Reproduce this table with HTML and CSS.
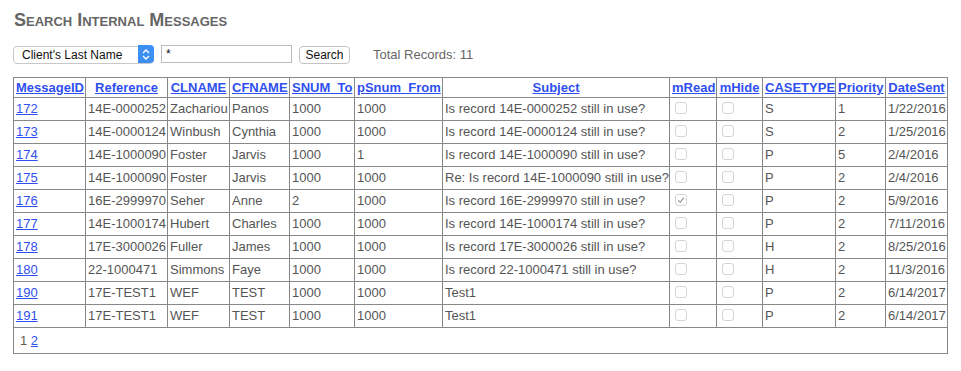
FILE: index.html
```html
<!DOCTYPE HTML>
<html lang="en">
<head>
    <meta charset="utf-8">
    <title>Search Internal Messages</title>
    <link rel="stylesheet" href="styles.css">
</head>
<body>
    <div class="page">
        <h2 class="page-title">Search Internal Messages</h2>

        <div class="search-bar">
            <span class="select-wrap">
                <select class="search-field">
                    <option>Client's Last Name</option>
                    <option>Reference</option>
                    <option>Subject</option>
                </select>
                <span class="select-arrow">
                    <svg width="8" height="11" viewBox="0 0 8 11">
                        <path d="M1 4 L4 1 L7 4 M1 7 L4 10 L7 7" fill="none" stroke="#fff" stroke-width="1.4"/>
                    </svg>
                </span>
            </span>
            <input type="text" class="search-text" value="*">
            <button type="button" class="search-btn">Search</button>
            <span class="total">Total Records: 11</span>
        </div>

        <table class="grid">
            <colgroup>
                <col style="width:72px"><col style="width:82px"><col style="width:62px"><col style="width:60px">
                <col style="width:65px"><col style="width:88px"><col style="width:227px"><col style="width:47px">
                <col style="width:46px"><col style="width:73px"><col style="width:50px"><col style="width:62px">
            </colgroup>
            <thead>
                <tr>
                    <th><a href="#">MessageID</a></th>
                    <th><a href="#">Reference</a></th>
                    <th><a href="#">CLNAME</a></th>
                    <th><a href="#">CFNAME</a></th>
                    <th><a href="#">SNUM_To</a></th>
                    <th><a href="#">pSnum_From</a></th>
                    <th><a href="#">Subject</a></th>
                    <th><a href="#">mRead</a></th>
                    <th><a href="#">mHide</a></th>
                    <th><a href="#">CASETYPE</a></th>
                    <th><a href="#">Priority</a></th>
                    <th><a href="#">DateSent</a></th>
                </tr>
            </thead>
            <tbody>
                <tr>
                    <td><a href="#">172</a></td><td>14E-0000252</td><td>Zachariou</td><td>Panos</td><td>1000</td><td>1000</td>
                    <td>Is record 14E-0000252 still in use?</td><td><span class="chk"></span></td><td><span class="chk"></span></td>
                    <td>S</td><td>1</td><td>1/22/2016</td>
                </tr>
                <tr>
                    <td><a href="#">173</a></td><td>14E-0000124</td><td>Winbush</td><td>Cynthia</td><td>1000</td><td>1000</td>
                    <td>Is record 14E-0000124 still in use?</td><td><span class="chk"></span></td><td><span class="chk"></span></td>
                    <td>S</td><td>2</td><td>1/25/2016</td>
                </tr>
                <tr>
                    <td><a href="#">174</a></td><td>14E-1000090</td><td>Foster</td><td>Jarvis</td><td>1000</td><td>1</td>
                    <td>Is record 14E-1000090 still in use?</td><td><span class="chk"></span></td><td><span class="chk"></span></td>
                    <td>P</td><td>5</td><td>2/4/2016</td>
                </tr>
                <tr>
                    <td><a href="#">175</a></td><td>14E-1000090</td><td>Foster</td><td>Jarvis</td><td>1000</td><td>1000</td>
                    <td>Re: Is record 14E-1000090 still in use?</td><td><span class="chk"></span></td><td><span class="chk"></span></td>
                    <td>P</td><td>2</td><td>2/4/2016</td>
                </tr>
                <tr>
                    <td><a href="#">176</a></td><td>16E-2999970</td><td>Seher</td><td>Anne</td><td>2</td><td>1000</td>
                    <td>Is record 16E-2999970 still in use?</td>
                    <td><span class="chk"><svg width="10" height="10" viewBox="0 0 10 10"><path d="M2.2 5.2 L4.2 7.3 L7.8 2.6" fill="none" stroke="#999" stroke-width="1.2"/></svg></span></td>
                    <td><span class="chk"></span></td>
                    <td>P</td><td>2</td><td>5/9/2016</td>
                </tr>
                <tr>
                    <td><a href="#">177</a></td><td>14E-1000174</td><td>Hubert</td><td>Charles</td><td>1000</td><td>1000</td>
                    <td>Is record 14E-1000174 still in use?</td><td><span class="chk"></span></td><td><span class="chk"></span></td>
                    <td>P</td><td>2</td><td>7/11/2016</td>
                </tr>
                <tr>
                    <td><a href="#">178</a></td><td>17E-3000026</td><td>Fuller</td><td>James</td><td>1000</td><td>1000</td>
                    <td>Is record 17E-3000026 still in use?</td><td><span class="chk"></span></td><td><span class="chk"></span></td>
                    <td>H</td><td>2</td><td>8/25/2016</td>
                </tr>
                <tr>
                    <td><a href="#">180</a></td><td>22-1000471</td><td>Simmons</td><td>Faye</td><td>1000</td><td>1000</td>
                    <td>Is record 22-1000471 still in use?</td><td><span class="chk"></span></td><td><span class="chk"></span></td>
                    <td>H</td><td>2</td><td>11/3/2016</td>
                </tr>
                <tr>
                    <td><a href="#">190</a></td><td>17E-TEST1</td><td>WEF</td><td>TEST</td><td>1000</td><td>1000</td>
                    <td>Test1</td><td><span class="chk"></span></td><td><span class="chk"></span></td>
                    <td>P</td><td>2</td><td>6/14/2017</td>
                </tr>
                <tr>
                    <td><a href="#">191</a></td><td>17E-TEST1</td><td>WEF</td><td>TEST</td><td>1000</td><td>1000</td>
                    <td>Test1</td><td><span class="chk"></span></td><td><span class="chk"></span></td>
                    <td>P</td><td>2</td><td>6/14/2017</td>
                </tr>
                <tr class="pager">
                    <td colspan="12"><span class="current">1</span> <a href="#">2</a></td>
                </tr>
            </tbody>
        </table>
    </div>
</body>
</html>
```

FILE: styles.css
```css
body {
    margin: 0;
    font-family: "Liberation Sans", Arial, sans-serif;
    color: #555;
    background: white;
}
.page {
    padding: 10px 0 0 13px;
}
.page-title {
    margin: 0 0 0 1px;
    font-size: 18px;
    line-height: 20px;
    font-weight: bold;
    font-variant: small-caps;
    color: #666;
}
.search-bar {
    display: flex;
    align-items: center;
    height: 20px;
    margin-top: 14px;
}
.select-wrap {
    position: relative;
    display: inline-block;
    width: 141px;
    height: 18px;
}
.search-field {
    appearance: none;
    -webkit-appearance: none;
    width: 141px;
    height: 18px;
    margin: 0;
    padding: 0 0 0 8px;
    border: 1px solid #c8c8c8;
    border-radius: 4px;
    background: white;
    font-family: "Liberation Sans", Arial, sans-serif;
    font-size: 12px;
    color: #111;
    box-sizing: border-box;
}
.select-arrow {
    position: absolute;
    top: 0;
    right: 0;
    width: 16px;
    height: 18px;
    border-radius: 0 4px 4px 0;
    background: #3b8ef2;
    display: flex;
    align-items: center;
    justify-content: center;
    pointer-events: none;
}
.search-text {
    width: 131px;
    height: 18px;
    margin: 0 0 0 7px;
    padding: 0 4px;
    border: 1px solid #bbb;
    font-family: "Liberation Sans", Arial, sans-serif;
    font-size: 12px;
    color: #111;
    box-sizing: border-box;
}
.search-btn {
    width: 51px;
    height: 18px;
    margin: 1px 0 0 7px;
    padding: 0;
    border: 1px solid #c4c4c4;
    border-radius: 4px;
    background: white;
    font-family: "Liberation Sans", Arial, sans-serif;
    font-size: 12px;
    color: #111;
}
.total {
    margin-left: 23px;
    font-size: 13px;
    color: #666;
}
.grid {
    margin-top: 13px;
    width: 935px;
    table-layout: fixed;
    border-collapse: collapse;
    border: 1px solid #888;
    font-size: 13px;
}
.grid th,
.grid td {
    border: 1px solid #888;
    padding: 3px 2px;
    line-height: 16px;
    white-space: nowrap;
    overflow: hidden;
    text-align: left;
    vertical-align: middle;
}
.grid th {
    padding: 2px 2px 1px;
    text-align: center;
}
.grid a {
    color: #2f4ff0;
}
.chk {
    display: inline-flex;
    align-items: center;
    justify-content: center;
    width: 12px;
    height: 12px;
    margin: 1px 0 0 3px;
    border: 1px solid #d4d4d4;
    border-radius: 3px;
    box-sizing: border-box;
    vertical-align: top;
}
.pager td {
    padding: 5px 6px 4px;
    line-height: 16px;
}
.pager .current {
    color: #665a4d;
}
```
